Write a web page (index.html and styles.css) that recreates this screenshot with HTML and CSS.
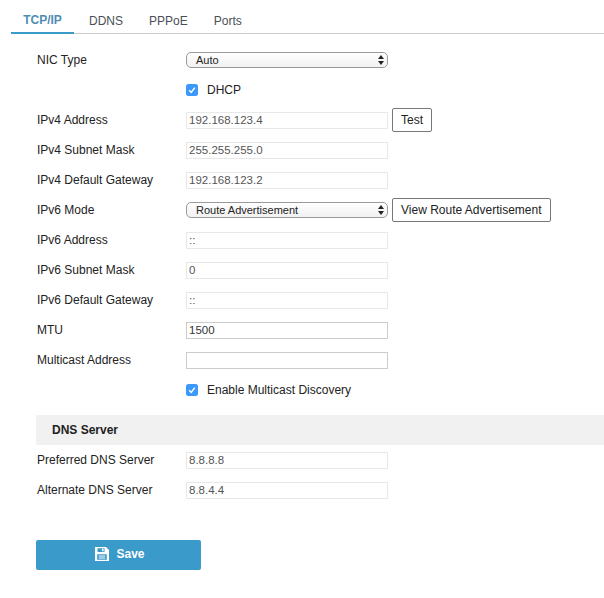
FILE: index.html
```html
<!DOCTYPE html>
<html>
  <head>
    <title>TCP/IP Settings</title>
    <meta charset="UTF-8">
    <link rel="stylesheet" href="styles.css">
  </head>
  <body>
    <div class="tabs">
      <a class="tab active">TCP/IP</a>
      <a class="tab">DDNS</a>
      <a class="tab">PPPoE</a>
      <a class="tab">Ports</a>
    </div>
    <form class="settings">
      <div class="row">
        <label class="row-label">NIC Type</label>
        <div class="select">
          <span>Auto</span>
          <svg class="arrows" width="6" height="10" viewBox="0 0 6 10"><path d="M3 0L6 4H0zM3 10L0 6H6z"/></svg>
        </div>
      </div>
      <div class="row">
        <span class="row-label"></span>
        <span class="check">
          <svg width="12" height="12" viewBox="0 0 12 12"><rect width="12" height="12" rx="2.5" fill="#3b99fc"/><path d="M3.2 6.2L5.2 8.4L8.8 3.6" fill="none" stroke="#fff" stroke-width="1.5"/></svg>
          DHCP
        </span>
      </div>
      <div class="row">
        <label class="row-label">IPv4 Address</label>
        <input class="field locked" value="192.168.123.4" disabled>
        <button type="button" class="btn">Test</button>
      </div>
      <div class="row">
        <label class="row-label">IPv4 Subnet Mask</label>
        <input class="field locked" value="255.255.255.0" disabled>
      </div>
      <div class="row">
        <label class="row-label">IPv4 Default Gateway</label>
        <input class="field locked" value="192.168.123.2" disabled>
      </div>
      <div class="row">
        <label class="row-label">IPv6 Mode</label>
        <div class="select">
          <span>Route Advertisement</span>
          <svg class="arrows" width="6" height="10" viewBox="0 0 6 10"><path d="M3 0L6 4H0zM3 10L0 6H6z"/></svg>
        </div>
        <button type="button" class="btn">View Route Advertisement</button>
      </div>
      <div class="row">
        <label class="row-label">IPv6 Address</label>
        <input class="field locked" value="::" disabled>
      </div>
      <div class="row">
        <label class="row-label">IPv6 Subnet Mask</label>
        <input class="field locked" value="0" disabled>
      </div>
      <div class="row">
        <label class="row-label">IPv6 Default Gateway</label>
        <input class="field locked" value="::" disabled>
      </div>
      <div class="row">
        <label class="row-label">MTU</label>
        <input class="field" value="1500">
      </div>
      <div class="row">
        <label class="row-label">Multicast Address</label>
        <input class="field" value="">
      </div>
      <div class="row">
        <span class="row-label"></span>
        <span class="check">
          <svg width="12" height="12" viewBox="0 0 12 12"><rect width="12" height="12" rx="2.5" fill="#3b99fc"/><path d="M3.2 6.2L5.2 8.4L8.8 3.6" fill="none" stroke="#fff" stroke-width="1.5"/></svg>
          Enable Multicast Discovery
        </span>
      </div>
      <div class="section">DNS Server</div>
      <div class="row">
        <label class="row-label">Preferred DNS Server</label>
        <input class="field locked" value="8.8.8.8" disabled>
      </div>
      <div class="row">
        <label class="row-label">Alternate DNS Server</label>
        <input class="field locked" value="8.8.4.4" disabled>
      </div>
      <button type="button" class="save">
        <svg width="14" height="14" viewBox="0 0 14 14"><path fill="#fff" fill-rule="evenodd" d="M0 0H11L14 3V14H0zM2.5 1.2V5H9.5V1.2zM7 1.8H8.6V4.2H7zM2.2 7.2V12.8H11.8V7.2zM3.8 8.6H10.2V9.6H3.8zM3.8 10.6H10.2V11.6H3.8z"/></svg>
        <span class="save-text">Save</span>
      </button>
    </form>
  </body>
</html>
```

FILE: styles.css
```css
/* Network settings page */
body {
  font-family: "Liberation Sans", Arial, sans-serif;
  font-size: 12px;
  color: #222;
  background-color: #fff;
  margin: 0;
  padding: 0;
}

.tabs {
  display: flex;
  height: 34px;
  margin-left: 11px;
  box-sizing: border-box;
  border-bottom: 1px solid #ccc;
}

.tab {
  padding-top: 14px;
  color: #4a4f55;
  box-sizing: border-box;
}

.tab + .tab {
  margin-left: 26px;
}

.tab.active {
  width: 63px;
  height: 34px;
  padding-top: 13px;
  margin-right: -11px;
  text-align: center;
  font-weight: bold;
  color: #4f8db5;
  border-bottom: 2px solid #3a9ac9;
}

.settings {
  padding: 11px 0 0 36px;
}

.row {
  display: flex;
  align-items: center;
  height: 30px;
}

.row-label {
  width: 150px;
  flex-shrink: 0;
  padding-left: 1px;
  box-sizing: border-box;
}

.field {
  width: 202px;
  height: 17px;
  box-sizing: border-box;
  margin: 0;
  padding: 0 2px;
  font: inherit;
  font-size: 11.5px;
  color: #333;
  border: 1px solid #ccc;
  border-radius: 0;
  background-color: #fff;
}

.field.locked {
  border-color: #e8e8e8;
  color: #555;
}

.select {
  position: relative;
  width: 202px;
  height: 16px;
  box-sizing: border-box;
  padding-left: 9px;
  font-size: 11px;
  line-height: 14px;
  color: #222;
  border: 1px solid #9a9a9a;
  border-radius: 5px;
  background: linear-gradient(#fff, #f1f1f1);
}

.arrows {
  position: absolute;
  right: 3px;
  top: 2px;
  fill: #222;
}

.btn {
  height: 24px;
  margin: 0 0 0 4px;
  padding: 0 8px;
  font: inherit;
  color: #222;
  border: 1px solid #777;
  border-radius: 2px;
  background-color: #fff;
}

.check {
  display: flex;
  align-items: center;
  gap: 9px;
}

.section {
  height: 30px;
  line-height: 30px;
  margin-top: 10px;
  padding-left: 16px;
  font-weight: bold;
  color: #222;
  background-color: #f1f1f1;
}

.save {
  display: flex;
  align-items: center;
  justify-content: center;
  gap: 7px;
  width: 165px;
  height: 30px;
  margin-top: 35px;
  padding: 0 0 2px 3px;
  font: inherit;
  font-weight: bold;
  color: #fff;
  border: none;
  border-radius: 2px;
  background-color: #3a9ac9;
}
```
